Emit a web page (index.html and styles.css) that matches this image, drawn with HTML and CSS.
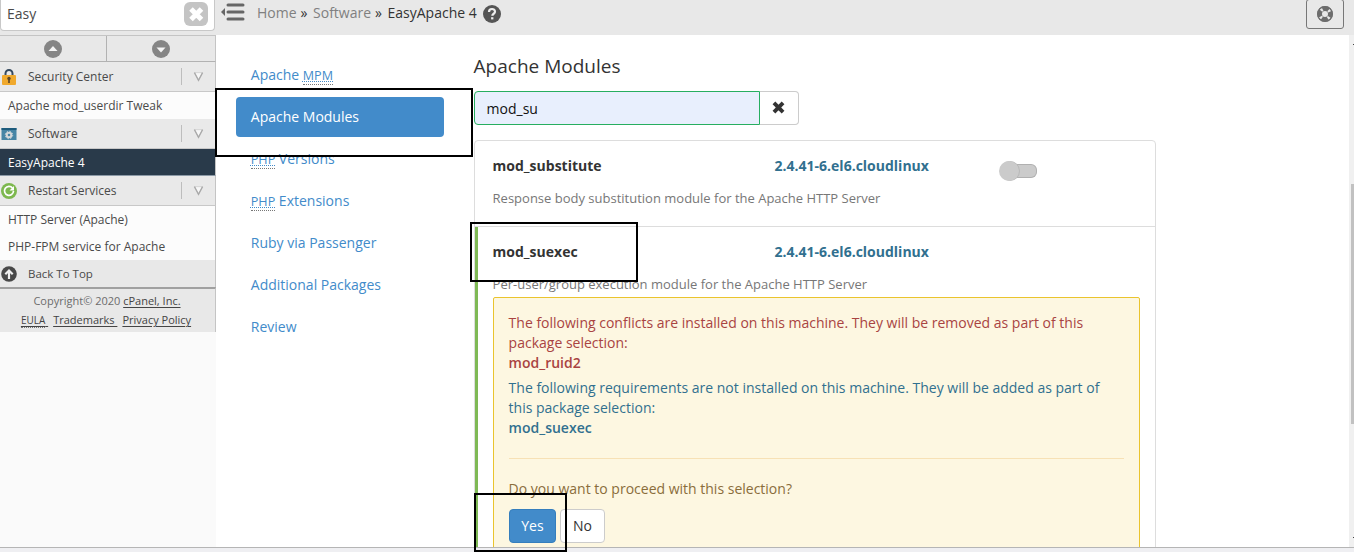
FILE: index.html
```html
<!DOCTYPE html>
<html lang="en">
<head>
<meta charset="utf-8">
<title>EasyApache 4</title>
<link rel="stylesheet" href="styles.css">
</head>
<body>
<div class="app">
  <aside class="sidebar">
    <div class="search">
      <div class="search-box"><span>Easy</span>
        <svg class="clear" viewBox="0 0 24 24"><rect width="24" height="24" rx="6" fill="#c4c4c4"/><path d="M7 7l10.500 10.500M17.500 7L7 17.500" stroke="#fff" stroke-width="5"/></svg>
      </div>
    </div>
    <div class="jump">
      <div><svg viewBox="0 0 18 18"><circle cx="9" cy="9" r="9" fill="#858585"/><path d="M4.500 11L9 6l4.500 5z" fill="#f4f4f4"/></svg></div>
      <div><svg viewBox="0 0 18 18"><circle cx="9" cy="9" r="9" fill="#858585"/><path d="M4.500 7.500L9 12.500l4.500-5z" fill="#f4f4f4"/></svg></div>
    </div>
    <div class="group">
      <svg class="gicon" viewBox="0 0 16 16"><path d="M4.500 7V4.500a3.500 3.500 0 0 1 7 0V7" fill="none" stroke="#34495e" stroke-width="2"/><rect x="1" y="6" width="14" height="10" rx="1" fill="#f0a92d"/><circle cx="8" cy="9.500" r="1.700" fill="#5b4526"/><path d="M7.200 10h1.600v4H7.200z" fill="#5b4526"/></svg>
      <span>Security Center</span><i></i>
      <svg class="chev" viewBox="0 0 10 10"><path d="M1.300 1.500L5 8.500l3.700-7z" fill="#f7f7f7" stroke="#d0d0d0" stroke-width=".8"/><path d="M1.300 1.500L5 8.500l3.700-7" fill="none" stroke="#a9a9a9" stroke-width="1.200"/></svg>
    </div>
    <div class="item">Apache mod_userdir Tweak</div>
    <div class="group">
      <svg class="gicon" viewBox="0 0 16 16"><path d="M.5 2h15v12H.5z" fill="#4785a5"/><path d="M.5 2h15v2H.5z" fill="#1d5b7c"/><circle cx="8" cy="9" r="2.300" fill="none" stroke="#d5d8da" stroke-width="2"/><circle cx="8" cy="9" r="3.700" fill="none" stroke="#d5d8da" stroke-width="1" stroke-dasharray="1.450"/></svg>
      <span>Software</span><i></i>
      <svg class="chev" viewBox="0 0 10 10"><path d="M1.300 1.500L5 8.500l3.700-7z" fill="#f7f7f7" stroke="#d0d0d0" stroke-width=".8"/><path d="M1.300 1.500L5 8.500l3.700-7" fill="none" stroke="#a9a9a9" stroke-width="1.200"/></svg>
    </div>
    <div class="item active">EasyApache 4</div>
    <div class="group restart">
      <svg class="gicon" viewBox="0 0 16 16"><circle cx="8" cy="8" r="8" fill="#7db84e"/><path d="M11.500 5A4.500 4.500 0 1 0 12.500 8" fill="none" stroke="#fff" stroke-width="1.700"/><path d="M8.500 7.500h4.500V3z" fill="#fff"/></svg>
      <span>Restart Services</span><i></i>
      <svg class="chev" viewBox="0 0 10 10"><path d="M1.300 1.500L5 8.500l3.700-7z" fill="#f7f7f7" stroke="#d0d0d0" stroke-width=".8"/><path d="M1.300 1.500L5 8.500l3.700-7" fill="none" stroke="#a9a9a9" stroke-width="1.200"/></svg>
    </div>
    <div class="item">HTTP Server (Apache)</div>
    <div class="item">PHP-FPM service for Apache</div>
    <div class="top-link">
      <svg class="gicon" viewBox="0 0 16 16"><circle cx="8" cy="8" r="7.800" fill="#484848"/><path d="M8 13V5M4.300 8.200L8 4.500l3.700 3.700" fill="none" stroke="#eee" stroke-width="2.200"/></svg>
      <span>Back To Top</span>
    </div>
    <footer class="legal">
      <div>Copyright© 2020 <a>cPanel, Inc.</a></div>
      <div class="links"><a><abbr>EULA</abbr>&nbsp;</a><a>Trademarks&nbsp;</a><a>Privacy Policy</a></div>
    </footer>
  </aside>
  <div class="page">
    <header class="header">
      <svg class="menu" viewBox="0 0 24 18"><path d="M7 2h15M7 9h15M7 16h15" stroke="#666" stroke-width="3" stroke-linecap="round"/><path d="M0 9l4-4v8z" fill="#666"/></svg>
      <div class="crumbs"><span>Home</span><b>»</b><span>Software</span><b>»</b><strong>EasyApache 4</strong></div>
      <svg class="help" viewBox="0 0 18 18"><circle cx="9" cy="9" r="9" fill="#555"/><path d="M6 7c0-4 6-3.900 6-.3 0 2.100-2.700 2-2.700 4.100" fill="none" stroke="#eee" stroke-width="2.200"/><path d="M8.100 12.200h2.300v2.200H8.100z" fill="#eee"/></svg>
      <div class="support"><svg viewBox="0 0 16 16"><circle cx="8" cy="8" r="5.500" fill="none" stroke="#6d6d6d" stroke-width="5"/><circle cx="8" cy="8" r="5.300" fill="none" stroke="#e8e8e8" stroke-width="3.600" stroke-dasharray="2.100 6.225" stroke-dashoffset="-3.110"/><circle cx="8" cy="8" r="7.300" fill="none" stroke="#6d6d6d" stroke-width="1.200"/></svg></div>
    </header>
    <div class="body">
      <nav class="steps">
        <a>Apache <abbr>MPM</abbr></a>
        <a class="current">Apache Modules</a>
        <a><abbr>PHP</abbr> Versions</a>
        <a><abbr>PHP</abbr> Extensions</a>
        <a>Ruby via Passenger</a>
        <a>Additional Packages</a>
        <a>Review</a>
      </nav>
      <main class="content">
        <h1>Apache Modules</h1>
        <div class="filter">
          <div class="field">mod_su</div>
          <div class="reset"><svg viewBox="0 0 12 12"><path d="M1.800 1.800l8.400 8.400M10.200 1.800l-8.400 8.400" stroke="#333" stroke-width="3.600"/></svg></div>
        </div>
        <section class="modules">
          <article class="module">
            <div class="row"><h2>mod_substitute</h2><span class="version">2.4.41-6.el6.cloudlinux</span><span class="toggle"><i></i></span></div>
            <p>Response body substitution module for the Apache HTTP Server</p>
          </article>
          <article class="module selected">
            <div class="row"><h2>mod_suexec</h2><span class="version">2.4.41-6.el6.cloudlinux</span></div>
            <p>Per-user/group execution module for the Apache HTTP Server</p>
            <div class="alert">
              <div class="danger">The following conflicts are installed on this machine. They will be removed as part of this package selection:<br><b>mod_ruid2</b></div>
              <div class="info">The following requirements are not installed on this machine. They will be added as part of this package selection:<br><b>mod_suexec</b></div>
              <hr>
              <div>Do you want to proceed with this selection?</div>
              <div class="buttons"><span class="btn primary">Yes</span><span class="btn">No</span></div>
            </div>
          </article>
        </section>
      </main>
      <div class="scroll"><div class="thumb"></div></div>
    </div>
  </div>
</div>
<div class="status"></div>
<div class="mark mark-nav"></div>
<div class="mark mark-module"></div>
<div class="mark mark-yes"></div>
<div class="tick tick-top"></div>
<div class="tick tick-bottom"></div>
</body>
</html>
```

FILE: styles.css
```css
* { box-sizing: border-box; }
body { margin: 0; height: 552px; overflow: hidden; position: relative; font: 14px/20px "Open Sans", "Noto Sans", sans-serif; color: #333; background: #fff; }
svg { display: block; flex: none; }
abbr { font-size: 90%; }
.app { display: flex; height: 547px; overflow: hidden; }
.status { height: 5px; border-top: 1px solid #b5b5b5; background: #efeff2; }

.sidebar { width: 216px; flex: none; background: #fafafa; font-size: 12px; color: #4a4a4a; }
.sidebar > div, .legal { border-right: 1px solid #c4c4c4; }
.sidebar > .search { height: 35px; background: #e8e8e8; border-right: 0; }
.search-box { width: 215px; height: 31px; padding: 0 7px 0 6px; display: flex; justify-content: space-between; background: #fff; border: 1px solid #c8c8c8; border-top: 0; border-radius: 0 0 4px 4px; font-size: 14px; line-height: 28px; }
.clear { width: 24px; height: 24px; margin-top: 2px; margin-right: -1px; }
.jump { height: 27px; display: flex; background: #e8e8e8; border-top: 1px solid #c4c4c4; border-bottom: 1px solid #b2b2b2; }
.jump div { width: 106px; display: flex; justify-content: center; align-items: center; }
.jump div + div { flex: 1; border-left: 1px solid #b2b2b2; }
.jump svg { width: 18px; height: 18px; }
.group { height: 30px; display: flex; align-items: center; background: #e9e9e9; border-bottom: 1px solid #c8c8c8; }
.gicon { width: 16px; height: 16px; margin: 0 11px 0 1px; }
.group span { flex: 1; }
.group i { width: 1px; height: 17px; background: #bdbdbd; }
.chev { width: 11px; height: 11px; margin: 0 11px 0 11px; }
.item { height: 27px; padding-left: 8px; line-height: 27px; background: #fcfcfc; }
.item.active { background: #293a4a; color: #fff; border-bottom: 1px solid #8b99a6; line-height: 28px; }
.top-link { height: 27px; display: flex; align-items: center; background: #e8e8e8; font-size: 11.500px; }
.legal { height: 45px; border-top: 2px solid #a0a0a0; background: #e8e8e8; text-align: center; font-size: 11px; line-height: 19px; padding: 2px 1px 0 0; color: #6c6c6c; }
.legal a { color: #444; text-decoration: underline; text-underline-offset: 2px; }
.legal abbr { font-size: 10px; border-bottom: 1px dotted #777; }
.links { display: flex; justify-content: center; gap: 5px; padding-right: 2px; }

.page { flex: 1; display: flex; flex-direction: column; min-width: 0; }
.header { height: 35px; flex: none; display: flex; background: #e8e8e8; padding-left: 5px; }
.menu { width: 24px; height: 18px; margin-top: 3px; }
.crumbs { display: flex; margin: 3px 6px 0 12px; color: #808080; }
.crumbs b { font-weight: 400; color: #333; margin: 0 5.500px 0 4px; }
.crumbs strong { font-weight: 400; color: #333; }
.help { width: 18px; height: 18px; margin-top: 5px; }
.support { width: 38px; height: 30px; margin: -1px 10px 0 auto; display: flex; justify-content: center; align-items: center; border: 1px solid #777; border-radius: 3px; }
.support svg { width: 16px; height: 16px; }

.body { flex: 1; display: flex; min-height: 0; }
.steps { width: 208px; flex: none; margin: 20px 29.600px 0 20px; display: flex; flex-direction: column; gap: 2px; }
.steps a { height: 40px; padding: 10px 14.800px; color: #428bca; border-radius: 4px; }
.steps a.current { background: #428bca; color: #fff; }
.steps abbr { text-decoration: underline dotted 1px; text-underline-offset: 1px; border-bottom: 1px dotted #777; }
.content { width: 682px; flex: none; }
h1 { margin: 18px 0 12px; font-size: 19px; line-height: 26px; font-weight: 400; }
.filter { display: flex; width: 325px; height: 34px; margin-bottom: 15px; }
.field { width: 286px; padding: 7px 12px 5px; background: #e8effd; border: 1px solid #27ae60; border-radius: 4px 0 0 4px; color: #111; }
.reset { flex: 1; border: 1px solid #ccc; border-left: 0; border-radius: 0 4px 4px 0; padding: 9px 0 0 12px; }
.reset svg { width: 13px; height: 13px; }
.modules { border: 1px solid #ddd; border-radius: 4px 4px 0 0; }
.module { height: 86px; padding: 15px 15px 0 18px; border-bottom: 1px solid #ddd; }
.module.selected { height: 360px; padding-left: 15px; border-left: 3px solid #7fb955; }
.row { display: flex; height: 20px; }
h2 { margin: 0; width: 282px; font-size: 14px; line-height: 20px; font-weight: 700; }
.version { width: 224px; font-weight: 700; color: #31708f; }
.toggle { width: 38px; height: 20px; margin-top: 5px; display: flex; align-items: center; }
.toggle i { width: 20px; height: 20px; flex: none; border-radius: 50%; background: #cbcbcb; box-shadow: 1px 0 0 #b8b8b8; z-index: 1; }
.toggle::after { content: ""; width: 22px; flex: none; height: 12px; margin-left: -5px; background: #cbcbcb; border: 1px solid #b0b0b0; border-left: 0; border-radius: 0 6px 6px 0; }
.module p { margin: 12px 0 0; height: 20px; font-size: 13px; color: #777; }
.alert { margin-top: 3px; height: 300px; padding: 15px; background: #fdf7e1; border: 1px solid #eac42e; border-radius: 2px; color: #8a6d3b; }
.danger { color: #a94442; margin-bottom: 5px; }
.info { color: #31708f; }
.alert b { font-weight: 600; }
hr { margin: 20px 0; border: 0; border-top: 1px solid #f7e1b5; }
.buttons { display: flex; gap: 4px; margin-top: 10px; }
.btn { height: 34px; padding: 6px 11.700px; border: 1px solid #ccc; border-radius: 4px; background: #fff; color: #333; }
.btn.primary { background: #428bca; border-color: #357ebd; color: #fff; }

.scroll { width: 5px; margin-left: auto; padding: 149px 0 0 2px; background: #f0f0f0; }
.thumb { height: 240px; background: #c1c1c1; }
.mark { position: absolute; border: 2px solid #000; }
.mark-nav { left: 215px; top: 88px; width: 258px; height: 69px; }
.mark-module { left: 470px; top: 222px; width: 168px; height: 60px; }
.mark-yes { left: 474px; top: 493px; width: 93px; height: 59px; }
.tick { position: absolute; left: 1353px; width: 1px; height: 1px; background: #444; }
.tick-top { top: 44px; }
.tick-bottom { top: 537px; }
```
